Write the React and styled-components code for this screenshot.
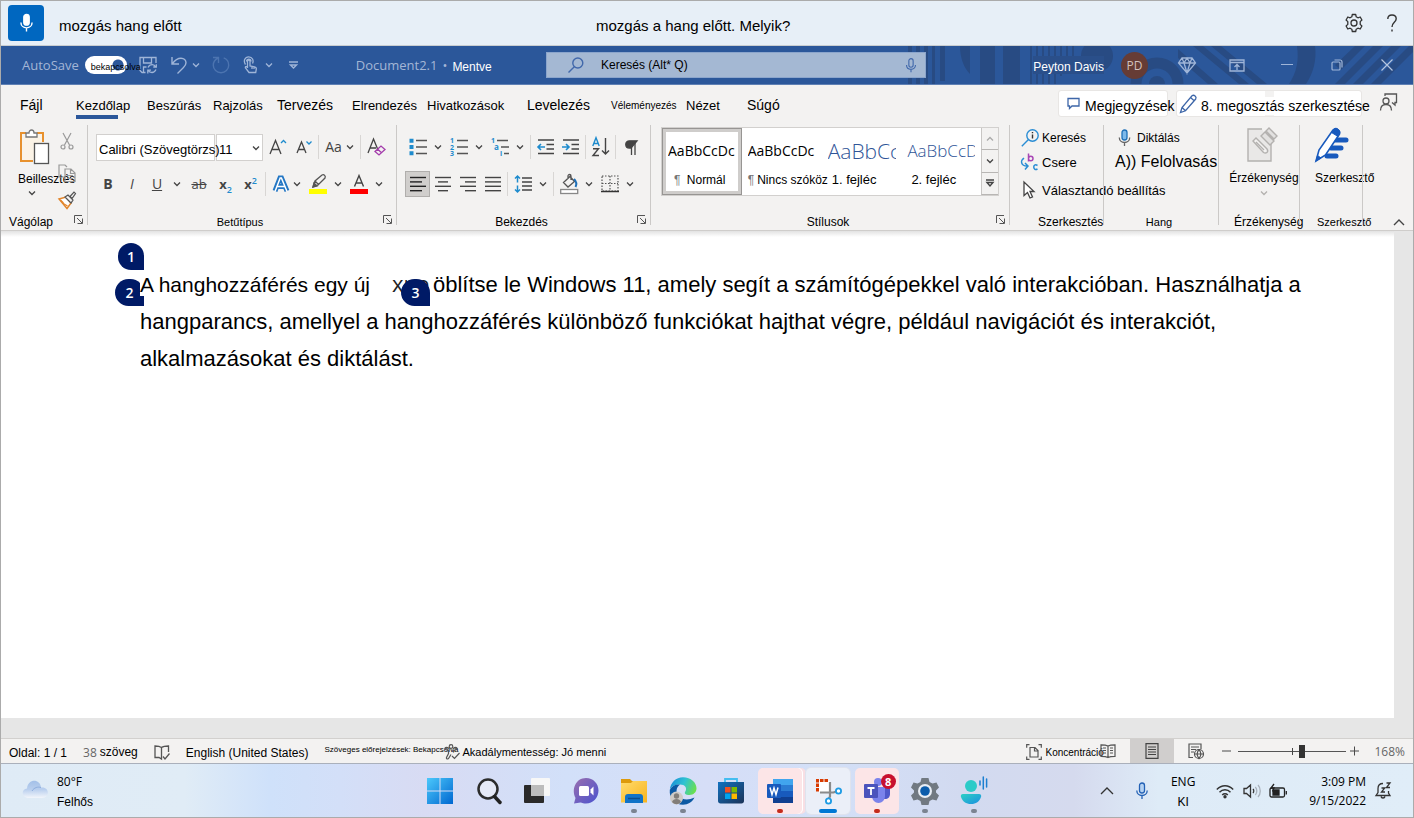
import React from "react";
import styled, { createGlobalStyle, css } from "styled-components";

const sans = '"Liberation Sans", Arial, sans-serif';
const ui = '"Open Sans", "Noto Sans", sans-serif';

const GlobalStyle = createGlobalStyle`
  * { box-sizing: border-box; }
  body { margin: 0; font-family: ${sans}; font-size: 12px; color: #000; background: #fff; }
  button, input, select { font: inherit; color: inherit; }
  button { border: 0; padding: 0; margin: 0; background: none; white-space: nowrap; }
  svg { display: block; flex: none; }
`;

const Desktop = styled.div`
  min-height: 100vh;
  display: flex;
  flex-direction: column;
  border: 1px solid #ababab;
`;

/* ---------- shared pieces ---------- */

const Drawing = styled.svg`
  overflow: visible;
`;

const Icon = ({ w = 18, h = w, box, color = "#4a4a4a", sw = 1, children }) => (
  <Drawing width={w} height={h} viewBox={box || `0 0 ${w} ${h}`} fill="none" stroke={color} strokeWidth={sw} aria-hidden="true">
    {children}
  </Drawing>
);

const Chevron = ({ color = "#444", up }) => (
  <Icon w={8} h={6} color={color} sw={1.3}>
    <path d={up ? "M1 4.5 4 1.5 7 4.5" : "M1 1.5 4 4.5 7 1.5"} />
  </Icon>
);

/* ---------- voice access bar ---------- */

const VoiceBar = styled.header`
  height: 45px;
  display: grid;
  grid-template-columns: 595fr 817fr;
  align-items: center;
  background: #e7eff7;
  border-bottom: 1px solid #c9cdd0;
  font-size: 15px;
`;
const VoicePart = styled.div`
  display: flex;
  align-items: center;
  justify-content: space-between;
  padding-right: 2px;
`;
const VoiceStatus = styled.div`
  display: flex;
  align-items: center;
  gap: 15px;
  padding-left: 7px;
`;
const VoiceText = styled.span`
  line-height: 20px;
  padding-top: 6px;
`;
const VoiceMic = styled.button`
  width: 36px;
  height: 36px;
  display: grid;
  place-items: center;
  border-radius: 4px;
  background: #0067c0;
`;
const VoiceTools = styled.div`
  display: flex;
`;
const VoiceTool = styled.button`
  width: 38px;
  height: 36px;
  display: grid;
  place-items: center;
`;

/* ---------- title bar ---------- */

const TitleBar = styled.div`
  position: relative;
  height: 39px;
  display: grid;
  grid-template-columns: 545fr 380fr 487fr;
  align-items: center;
  background: #2b579a;
  border-bottom: 1px solid #5f80b4;
  color: #fff;
`;
const Pattern = styled.svg`
  position: absolute;
  right: 0;
  top: 0;
  overflow: hidden;
`;
const QuickAccess = styled.div`
  display: flex;
  align-items: center;
  gap: 12px;
  padding-left: 21px;
`;
const AutoSave = styled.label`
  display: flex;
  align-items: center;
  gap: 6px;
  color: #a3b6d6;
  font-family: ${ui};
  font-size: 13px;
`;
const SwitchBox = styled.span`
  position: relative;
  display: flex;
`;
const Switch = styled.input`
  appearance: none;
  width: 42px;
  height: 18px;
  margin: 0;
  border-radius: 9px;
  background: radial-gradient(circle at 33px 9px, #2b579a 5px, #fff 6px);
`;
const SwitchText = styled.span`
  position: absolute;
  left: 6px;
  top: 5px;
  font: 9px/12px ${sans};
  color: #000;
`;
const QuickButton = styled.button`
  display: flex;
  align-items: center;
  justify-content: center;
  gap: 5px;
  min-width: 18px;
  height: 30px;
`;
const DocTitle = styled.div`
  display: flex;
  align-items: center;
  gap: 5px;
  margin-left: 41px;
  font-family: ${ui};
  font-size: 13px;
  color: #a3b6d6;
`;
const Saved = styled.span`
  font: 12px/16px ${sans};
  color: #fff;
  padding-top: 4px;
`;
const SearchBox = styled.label`
  position: relative;
  display: flex;
  align-items: center;
  height: 26px;
  padding: 0 8px 0 21px;
  gap: 17px;
  background: #a4b8d3;
  border: 1px solid #8ba5cc;
`;
const SearchInput = styled.input`
  flex: 1;
  min-width: 0;
  height: 22px;
  padding: 0;
  border: 0;
  background: none;
  font-size: 12px;
  &::placeholder { color: #000; opacity: 1; }
`;
const WindowTools = styled.div`
  position: relative;
  display: flex;
  align-items: center;
  justify-content: flex-end;
  padding-right: 1px;
`;
const UserName = styled.span`
  padding: 4px 0 0;
  margin-right: 17px;
  background: #2a4f8a;
`;
const Avatar = styled.span`
  width: 27px;
  height: 27px;
  margin-right: 14px;
  border-radius: 50%;
  display: grid;
  place-items: center;
  background: #663c35;
  color: #d3c2bf;
  font-family: ${ui};
  font-size: 12px;
`;
const WindowButton = styled.button`
  width: 50px;
  height: 38px;
  display: grid;
  place-items: center;
`;

/* ---------- ribbon tabs ---------- */

const TabBar = styled.nav`
  height: 35px;
  display: flex;
  justify-content: space-between;
  background: #f3f2f1;
`;
const Tabs = styled.div`
  display: grid;
  grid-template-columns: 56px 71px 66px 64px 75px 75px 100px 84px 75px 61px 40px;
  padding-left: 19px;
`;
const Tab = styled.button`
  text-align: left;
  padding-top: 6px;
  height: 34px;
  font-size: ${(p) => p.$size || 13}px;
  ${(p) =>
    p.$active &&
    css`
      background: linear-gradient(#2b579a, #2b579a) 0 100% / 42px 4px no-repeat;
    `}
`;
const TabActions = styled.div`
  display: flex;
  align-items: flex-start;
  gap: 8px;
  padding: 5px 16px 0 0;
  font-size: 14px;
`;
const ActionButton = styled.button`
  width: ${(p) => p.$w}px;
  height: 27px;
  display: flex;
  align-items: center;
  gap: ${(p) => p.$gap || 4}px;
  padding-left: ${(p) => p.$pl || 8}px;
  background: ${(p) =>
    p.$parted
      ? "linear-gradient(90deg, #fff 88px, #f3f2f1 88px, #f3f2f1 97px, #fff 97px)"
      : "#fff"};
  border: 1px solid #e8e6e4;
  border-radius: 3px;
`;
const ActionLabel = styled.span`
  position: relative;
  width: ${(p) => p.$w || 82}px;
  line-height: 18px;
  margin-top: 4px;
  text-align: left;
  background: #fff;
`;
const FeedbackButton = styled.button`
  position: relative;
  padding: 3px 0 0 10px;
`;

/* ---------- ribbon ---------- */

const Ribbon = styled.div`
  height: 111px;
  display: flex;
  background: #f3f2f1;
  border-bottom: 1px solid #cfcdcb;
`;
const Group = styled.section`
  width: ${(p) => p.$w}px;
  flex: none;
  display: flex;
  flex-direction: column;
  justify-content: space-between;
`;
const Divider = styled.span`
  flex: none;
  width: 1px;
  height: 100px;
  margin-top: 5px;
  background: #cbc9c7;
`;
const GroupFooter = styled.div`
  display: grid;
  grid-template-columns: ${(p) => (p.$pl ? "auto 1fr" : "1fr auto 1fr")};
  align-items: center;
  padding-left: ${(p) => p.$pl || 0}px;
  padding-right: 4px;
  height: 15px;
  line-height: 15px;
  font-size: ${(p) => p.$size || 12}px;
  white-space: nowrap;
`;
const LaunchButton = styled.button`
  grid-column: -2;
  justify-self: end;
  align-self: start;
`;
const ToolRows = styled.div`
  display: flex;
  flex-direction: column;
  gap: 11px;
  padding: 14px 0 0 8px;
`;
const ToolRow = styled.div`
  display: flex;
  align-items: center;
  height: 26px;
`;
const Tool = styled.button`
  flex: none;
  width: ${(p) => (p.$split ? "auto" : `${p.$w || 25}px`)};
  height: 26px;
  display: flex;
  align-items: center;
  justify-content: center;
  gap: ${(p) => p.$gap || 7}px;
  padding: 0 ${(p) => (p.$split ? 4 : 0)}px;
  background: ${(p) => (p.$on ? "#d0cecc" : "none")};
  outline: ${(p) => (p.$on ? "1px solid #b0aeac" : "0")};
  outline-offset: -1px;
`;
const Sep = styled.span`
  width: 1px;
  height: 24px;
  margin: 0 2px;
  background: #d8d6d4;
`;
const Glyph = styled.span`
  font-family: ${ui};
  font-size: ${(p) => p.$size || 15}px;
  line-height: 18px;
  font-weight: ${(p) => (p.$bold ? 700 : 400)};
  font-style: ${(p) => (p.$italic ? "italic" : "normal")};
  text-decoration: ${(p) => p.$deco || "none"};
  color: #444;
  min-width: ${(p) => p.$min || 0}px;
  sub, sup { font-size: 9px; line-height: 0; color: #1e8bcd; font-weight: 600; }
`;
const Combo = styled.span`
  width: ${(p) => p.$w}px;
  height: 27px;
  margin-right: 1px;
  display: flex;
  align-items: center;
  background: #fff;
  border: 1px solid #d2d0ce;
`;
const ComboSelect = styled.select`
  flex: none;
  position: relative;
  appearance: none;
  width: ${(p) => p.$w}px;
  height: 25px;
  padding: 5px 0 0 2px;
  border: 0;
  background: transparent;
  font-size: 13px;
`;
const ComboArrow = styled.span`
  margin-left: -10px;
  padding-top: 2px;
`;

const Clipboard = styled.div`
  display: grid;
  grid-template-columns: 54px 24px;
  padding: 9px 0 0 3px;
`;
const PasteButton = styled.button`
  display: flex;
  flex-direction: column;
  align-items: flex-start;
  padding-left: 14px;
  span { line-height: 14px; margin: 7px 0 4px; }
`;
const PasteArrow = styled.i`
  padding-left: 10px;
`;
const SmallStack = styled.div`
  display: flex;
  flex-direction: column;
  gap: 9px;
`;

const Gallery = styled.div`
  display: flex;
  width: 338px;
  height: 69px;
  margin: 7px 0 0 10px;
  background: #fff;
  border: 1px solid #d2d0ce;
`;
const StyleTile = styled.button`
  width: 80px;
  height: 67px;
  display: grid;
  grid-template-rows: 35px 22px;
  align-content: center;
  padding: 0 0 0 6px;
  text-align: left;
  ${(p) =>
    p.$on &&
    css`
      box-shadow: inset 0 0 0 1px #979593, inset 0 0 0 4px #cfcdcb;
    `}
`;
const StyleSample = styled.span`
  width: 68px;
  overflow: hidden;
  align-self: center;
  font-family: ${ui};
  font-weight: ${(p) => (p.$head ? 300 : 400)};
  font-size: ${(p) => p.$size}px;
  line-height: 28px;
  color: ${(p) => (p.$head ? "#2f5597" : "#000")};
`;
const StyleName = styled.span`
  padding-left: ${(p) => p.$pl || 0}px;
  font-size: ${(p) => p.$size || 12}px;
  line-height: 24px;
  i { font-style: normal; color: #777; font-size: 12px; margin-right: 3px; }
`;
const GalleryNav = styled.div`
  display: grid;
  grid-template-rows: 1fr 1fr 1fr;
  width: 17px;
`;
const GalleryButton = styled.button`
  display: grid;
  place-items: center;
  background: #f3f2f1;
  border-left: 1px solid #c8c6c4;
  border-bottom: 1px solid #b8b6b4;
`;

const CommandList = styled.div`
  display: grid;
  grid-template-rows: 24px 24px 32px;
  padding: 6px 0 0 11px;
`;
const Command = styled.button`
  display: flex;
  align-items: center;
  gap: 3px;
  font-size: ${(p) => p.$size || 12}px;
`;
const BigButton = styled.button`
  display: flex;
  flex-direction: column;
  align-items: ${(p) => (p.$start ? "flex-start" : "center")};
  width: 90px;
  padding: 7px 0 0 ${(p) => (p.$start ? 15 : 0)}px;
  span { line-height: 16px; margin: 7px 0 4px; }
`;
const CollapseCell = styled.div`
  flex: 1;
  display: flex;
  justify-content: flex-end;
  align-items: flex-end;
  padding: 0 8px 4px 0;
`;

/* ---------- document ---------- */

const Canvas = styled.main`
  flex: 1;
  display: flex;
  padding: 0 19px 20px 0;
  background: #e6e6e6;
`;
const Page = styled.article`
  flex: 1;
  padding: 35px 80px 0 139px;
  background: linear-gradient(#e2e2e2, #fff 6px);
`;
const Paragraph = styled.p`
  position: relative;
  z-index: 0;
  margin: 0;
  font-size: 22px;
  line-height: 37px;
`;
const Lead = styled.span`
  position: relative;
  font-size: 21px;
  background: #fff;
`;
const Covered = styled.span`
  display: inline-block;
  width: 41px;
  margin-left: 22px;
  line-height: 24px;
  font-family: ${ui};
  color: #222;
`;
const Badge = styled.span`
  position: absolute;
  left: ${(p) => p.$x}px;
  top: ${(p) => p.$y}px;
  width: ${(p) => p.$w || 29}px;
  height: 27px;
  border-radius: 14px 14px 0 14px;
  background: #001a66;
  color: #fff;
  font: 600 14px/27px ${ui};
  text-align: center;
`;

/* ---------- status bar ---------- */

const StatusBar = styled.footer`
  height: 26px;
  display: flex;
  justify-content: space-between;
  align-items: center;
  background: #f3f2f1;
  border-top: 1px solid #d2d0ce;
  border-bottom: 1px solid #aab0bb;
`;
const StatusPart = styled.div`
  display: flex;
  align-items: center;
  gap: ${(p) => p.$gap || 0}px;
  padding: 0 8px;
  height: 24px;
`;
const StatusItem = styled.button`
  display: flex;
  align-items: center;
  gap: 3px;
  height: 24px;
  padding-top: ${(p) => (p.$low ? 4 : 2)}px;
  width: ${(p) => (p.$w ? `${p.$w}px` : "auto")};
  font-size: ${(p) => p.$size || 12}px;
`;
const Count = styled.span`
  font-family: ${ui};
  font-size: 12px;
  color: #666;
`;
const Prediction = styled.div`
  display: flex;
  align-items: center;
  > :first-child { align-items: flex-start; padding-top: 6px; }
`;
const ViewButton = styled.button`
  width: 44px;
  height: 24px;
  display: grid;
  place-items: center;
  background: ${(p) => (p.$on ? "#d0cecd" : "none")};
`;
const ZoomStep = styled.button`
  width: 12px;
  margin: 0 4px;
`;
const ZoomRange = styled.input`
  appearance: none;
  width: 108px;
  height: 14px;
  margin: 0;
  background: linear-gradient(#444, #444) 54px 50% / 1px 7px no-repeat,
    linear-gradient(#555, #555) 0 50% / 100% 1px no-repeat;
  &::-webkit-slider-thumb { appearance: none; width: 6px; height: 13px; background: #333; }
`;
const ZoomValue = styled.span`
  margin-left: 8px;
  font-family: ${ui};
  color: #666;
`;

/* ---------- taskbar ---------- */

const Taskbar = styled.div`
  height: 53px;
  display: grid;
  grid-template-columns: 1fr 582px 1fr;
  align-items: center;
  font-family: ${ui};
  background: linear-gradient(90deg, #dfebf6 0%, #e0ecf6 13%, #cfe1fa 19%, #d3dff8 24%, #d8dbf3 30%, #d2e0f9 40%, #d6def7 50%, #d3e0f8 58%, #d2daf0 68%, #d5daee 76%, #deebf7 82%, #e0edf8 100%);
`;
const Weather = styled.button`
  display: flex;
  align-items: center;
  gap: 8px;
  padding-left: 21px;
  text-align: left;
`;
const TwoLines = styled.span`
  display: grid;
  grid-template-rows: 19px 19px;
  align-items: center;
  text-align: ${(p) => p.$align || "left"};
  b { font-weight: 400; font-family: ${sans}; padding-top: 3px; }
`;
const AppList = styled.div`
  display: grid;
  grid-template-columns: repeat(12, 1fr);
  justify-items: center;
`;
const TaskButton = styled.button`
  position: relative;
  width: 44px;
  height: 46px;
  display: grid;
  place-items: center;
  border-radius: 5px;
  background: ${(p) => p.$bg || "none"};
  box-shadow: ${(p) => p.$edge || "none"};
  &::after {
    content: "";
    position: absolute;
    bottom: 1px;
    left: 50%;
    width: ${(p) => p.$mw || 6}px;
    height: 4px;
    margin-left: -${(p) => (p.$mw || 6) / 2}px;
    border-radius: 2px;
    background: ${(p) => p.$mark || "transparent"};
  }
`;
const AlertCount = styled.span`
  position: absolute;
  top: 6px;
  right: 3px;
  width: 15px;
  height: 15px;
  border-radius: 50%;
  background: #c8102e;
  color: #fff;
  font: 700 11px/15px ${ui};
`;
const Tray = styled.div`
  display: flex;
  align-items: center;
  justify-content: flex-end;
  padding-right: 20px;
`;
const TrayButton = styled.button`
  width: ${(p) => p.$w}px;
  height: 40px;
  display: grid;
  place-items: center;
`;
const Clock = styled.button`
  margin: 0 9px 0 12px;
`;

/* ---------- drawings ---------- */

const Mic = ({ color = "#fff", fill = "none", h = 18, w = 14, sw = 1.3, capsule }) => (
  <Icon w={w} h={h} box="0 0 14 18" color={color} sw={sw}>
    <rect x="4.5" y="1" width="5" height="10" rx="2.5" fill={fill} stroke={capsule || color} />
    <path d="M1.8 8.5c0 3 2.2 5 5.2 5s5.200-2 5.200-5M7 13.500V17" />
  </Icon>
);

const Lines = ({ rows, color = "#444" }) => (
  <Icon w={18} h={16} color={color} sw={1.4}>
    {rows.map(([a, b], i) => (
      <path key={i} d={`M${a} ${1.5 + i * 4.4}H${b}`} />
    ))}
  </Icon>
);

const TinyText = ({ x, y, children, size = 7 }) => (
  <text x={x} y={y} fontSize={size} fontWeight="700" fill="#1e8bcd" stroke="none" fontFamily="Open Sans, sans-serif">
    {children}
  </text>
);

const Launcher = ({ name }) => (
  <LaunchButton aria-label={name}>
    <Icon w={9} h={9} color="#555">
      <path d="M8 .5H.5V8M3 3l5 5M8.5 3.5v5h-5" />
    </Icon>
  </LaunchButton>
);

const Footer = ({ label, launcher, pl, size }) => (
  <GroupFooter $pl={pl} $size={size}>
    {!pl && <span />}
    <span>{label}</span>
    {launcher ? <Launcher name={label} /> : !pl && <span />}
  </GroupFooter>
);

const TitlePattern = () => (
  <Pattern width="510" height="38" viewBox="0 0 510 38" aria-hidden="true">
    <g fill="#284b83">
      <path d="M5 0h4v38H5zM13 0h4v38h-4zM21 0h4v38h-4zM29 0h3v38h-3zM37 0h5v35h-5zM57 0h10v28c-6-6-10-16-10-28zM77 0h15v38H77zM100 0h17v38h-17z" />
      <path d="M127 0h2v38h-2zM133 0h2v38h-2zM139 0h2v38h-2zM145 0h2v38h-2zM151 0h2v38h-2zM157 0h2v30h-2zM163 0h2v24h-2zM169 0h2v18h-2z" />
      <circle cx="194" cy="10" r="16" />
      <path d="M290 0h10l46 38h-10zM308 0h10l46 38h-10zM275 3l40 35h-10l-30-26z" />
      <path d="M396 0h18c2 14-2 28-9 38h-17c8-12 10-24 8-38z" transform="translate(-2 0)" />
      <path d="M470 0h10l-38 38h-10zM452 0h10l-24 24-6-5zM488 0h10l-38 38h-10zM506 0h10l-38 38h-10z" />
    </g>
    <circle cx="254" cy="38" r="21" fill="none" stroke="#284b83" strokeWidth="11" />
    <circle cx="254" cy="38" r="8" fill="#284b83" />
  </Pattern>
);

const tint = "#9fb5d8";

const tabs = [
  ["Fájl", 14],
  ["Kezdőlap", 13, true],
  ["Beszúrás", 13],
  ["Rajzolás", 13],
  ["Tervezés", 14],
  ["Elrendezés", 13],
  ["Hivatkozások", 13],
  ["Levelezés", 14],
  ["Véleményezés", 10],
  ["Nézet", 13],
  ["Súgó", 14],
];

function TopBars() {
  return (
    <>
      <VoiceBar>
        <VoiceStatus>
          <VoiceMic aria-label="Mikrofon">
            <Mic fill="#fff" w={15} h={20} />
          </VoiceMic>
          <VoiceText>mozgás hang előtt</VoiceText>
        </VoiceStatus>
        <VoicePart>
          <VoiceText>mozgás a hang előtt. Melyik?</VoiceText>
          <VoiceTools>
            <VoiceTool aria-label="Beállítások">
              <Icon w={20} color="#333" sw={1.3}>
                <path d="M8.3 1.500h3.400l.5 2.300 1.700 1 2.300-.8 1.700 3-1.700 1.600v2.800l1.700 1.600-1.700 3-2.300-.8-1.700 1-.5 2.300H8.300l-.5-2.300-1.700-1-2.300.8-1.700-3 1.700-1.600V8.600L2.100 7l1.700-3 2.300.8 1.700-1z" strokeLinejoin="round" />
                <circle cx="10" cy="10" r="3" />
              </Icon>
            </VoiceTool>
            <VoiceTool aria-label="Súgó">
              <Icon w={12} h={18} color="#333" sw={1.4}>
                <path d="M1.800 5c0-2.400 1.700-4 4.200-4s4.200 1.600 4.200 3.800C10.200 8.300 6 8.500 6 13M6 15.500v2" />
              </Icon>
            </VoiceTool>
          </VoiceTools>
        </VoicePart>
      </VoiceBar>

      <TitleBar>
        <TitlePattern />
        <QuickAccess>
          <AutoSave>
            AutoSave
            <SwitchBox>
              <Switch type="checkbox" role="switch" defaultChecked />
              <SwitchText>bekapcsolva</SwitchText>
            </SwitchBox>
          </AutoSave>
          <QuickButton aria-label="Mentés">
            <Icon w={18} color={tint} sw={1.3}>
              <path d="M6.500 16.500H3L1 14.500V1.500h16V7M4.500 1.500V7h8V1.500M4.500 16v-5h3" />
              <path d="M9 11.500c1-2 2.500-2.800 4.200-2.800 1.600 0 2.800.8 3.600 2.300M17.300 8.200V11h-3M17 13.500c-1 2-2.200 3-4 3-1.600 0-3-.8-3.800-2.300M8.800 17.500v-3.300H12" />
            </Icon>
          </QuickButton>
          <QuickButton aria-label="Visszavonás">
            <Icon w={18} color={tint} sw={1.4}>
              <path d="M3 1v7h7M3.200 7.800C6 4 9 2.200 12 2.200c3 0 5 2 5 4.600 0 2-1 3.200-2.500 4.700L8.500 17.500" />
            </Icon>
            <Chevron color={tint} />
          </QuickButton>
          <QuickButton aria-label="Ismétlés">
            <Icon w={18} color="#4c74b0" sw={1.4}>
              <path d="M1 1.500h5.500V7M6 2C3 3.500 1.300 6.200 1.300 9.200c0 4.200 3.400 7.600 7.700 7.600s7.700-3.400 7.700-7.600c0-3.300-2-6.200-5-7.300" />
            </Icon>
          </QuickButton>
          <QuickButton aria-label="Érintés">
            <Icon w={18} color={tint} sw={1.3}>
              <path d="M5.500 12V5.500c0-2 2.500-2 2.500 0V10l4.500.8c1.500.3 2 1 1.800 2.300l-.6 3.400H7L3.500 12c-.6-1.200.8-2 2-.8zM3.500 8.500C1 5 3 .8 6.700.8S12 4.500 10.500 7.500M4.500 5.500c0-3.200 4.500-3.200 4.500 0M10 10.500V13M12 11v2" />
            </Icon>
            <Chevron color={tint} />
          </QuickButton>
          <QuickButton aria-label="Testreszabás">
            <Icon w={9} h={8} color={tint} sw={1.4}>
              <path d="M0 1h9M1.500 4l3 3 3-3z" />
            </Icon>
          </QuickButton>
          <DocTitle>
            Document2.1 <span>•</span> <Saved>Mentve</Saved>
          </DocTitle>
        </QuickAccess>
        <SearchBox>
          <Icon w={16} color="#4168ab" sw={1.4}>
            <circle cx="9.800" cy="6" r="5" />
            <path d="M6.300 9.700.5 15.500" />
          </Icon>
          <SearchInput type="search" placeholder="Keresés (Alt* Q)" aria-label="Keresés" />
          <Mic color="#4168ab" w={12} h={17} />
        </SearchBox>
        <WindowTools>
          <UserName>Peyton Davis</UserName>
          <Avatar>PD</Avatar>
          <WindowButton aria-label="Premium">
            <Icon w={18} h={17} color={tint} sw={1.3}>
              <path d="M4 1h10l3.500 5L9 16 .5 6zM.5 6h17M4 1l2 5 3 10 3-10 2-5M6 6l3-5 3 5" />
            </Icon>
          </WindowButton>
          <WindowButton aria-label="Menüszalag megjelenítése">
            <Icon w={16} h={13} color={tint} sw={1.3}>
              <path d="M1 1h14v11H1zM1 3.500h14M8 11V5.500M5.500 8 8 5.500 10.500 8" />
            </Icon>
          </WindowButton>
          <WindowButton aria-label="Kis méret">
            <Icon w={12} h={2} color={tint}>
              <path d="M0 .5h12" />
            </Icon>
          </WindowButton>
          <WindowButton aria-label="Előző méret">
            <Icon w={12} color={tint} sw={1.2}>
              <rect x="1" y="3" width="8" height="8" rx="1" />
              <path d="M3.500 1H9c1.300 0 2 .7 2 2v5.500" />
            </Icon>
          </WindowButton>
          <WindowButton aria-label="Bezárás">
            <Icon w={12} color="#b5c6e0" sw={1.2}>
              <path d="m.5.5 11 11M11.500.5l-11 11" />
            </Icon>
          </WindowButton>
        </WindowTools>
      </TitleBar>

      <TabBar>
        <Tabs>
          {tabs.map(([name, size, active]) => (
            <Tab key={name} $size={size} $active={active}>
              {name}
            </Tab>
          ))}
        </Tabs>
        <TabActions>
          <ActionButton $w={110} $gap={5}>
            <Icon w={13} h={13} color="#3d66a8" sw={1.3}>
              <path d="M1 1.500h11v7.500H5L2.500 11.500V9H1z" />
            </Icon>
            <ActionLabel>Megjegyzések</ActionLabel>
          </ActionButton>
          <ActionButton $w={186} $pl={2} $gap={4} $parted>
            <Icon w={18} h={20} color="#3d66a8" sw={1.3}>
              <path d="M1.500 18.500l1.500-5L13 1.800c2-1.500 5 1 3.700 3.200L6.500 16.800zM11.500 3.500l3.700 3.200M3 13.500l3.500 3.300" />
            </Icon>
            <ActionLabel $w={159}>8. megosztás szerkesztése</ActionLabel>
          </ActionButton>
          <FeedbackButton aria-label="Visszajelzés">
            <Icon w={17} h={18} color="#555" sw={1.3}>
              <circle cx="6" cy="8" r="3" />
              <path d="M.5 17.500c0-4 2.500-6 5.500-6s5.500 2 5.500 6M5 3V1h11.500v8.500H15V12l-3-2.500" />
            </Icon>
          </FeedbackButton>
        </TabActions>
      </TabBar>
    </>
  );
}

function ClipboardGroup() {
  return (
    <Group $w={86}>
      <Clipboard>
        <PasteButton>
          <Icon w={32} h={36} color="#e8912d" sw={2}>
            <path d="M8 4H3v28h12M19 4h6v9" fill="none" />
            <path d="M4.500 6H24v8h-8v17H4.500z" fill="#fbf3e6" stroke="none" />
            <path d="M8 8V4h3c0-4 5-4 5 0h3v4z" fill="#fff" stroke="#777" strokeWidth="1.300" />
            <rect x="16.500" y="14.500" width="14" height="20" fill="#fff" stroke="#555" strokeWidth="1.300" />
          </Icon>
          <span>Beillesztés</span>
          <PasteArrow>
            <Chevron />
          </PasteArrow>
        </PasteButton>
        <SmallStack>
          <Tool $w={18} aria-label="Kivágás">
            <Icon w={14} h={18} color="#999" sw={1.2}>
              <path d="M3 0l6.500 12M11 0 4.500 12" />
              <circle cx="3" cy="14" r="2" />
              <circle cx="11" cy="14" r="2" />
            </Icon>
          </Tool>
          <Icon w={18} h={18} color="#999" sw={1.2}>
            <path d="M6 13H1V1h6l2 2M7 5h6l4 4v8.500H7zM12.500 5v4.500H17M9 11.500h6M9 14.500h6" />
          </Icon>
          <Icon w={18} h={18} color="#555" sw={1.2}>
            <path d="M1 8l7-2 5 6-4 5.500z" fill="#fff" stroke="#e2852b" strokeWidth="1.500" />
            <path d="M4.500 12l5 3M2.500 9l3 3" stroke="#e2852b" />
            <path d="M7 6l3-2 5 5-2 3zM12 5.500 16 1l1.500 1.500L14 7.500z" fill="#f3f2f1" />
          </Icon>
        </SmallStack>
      </Clipboard>
      <Footer label="Vágólap" launcher pl={8} />
    </Group>
  );
}

function FontGroup() {
  return (
    <Group $w={308}>
      <ToolRows>
        <ToolRow>
          <Combo $w={119}>
            <ComboSelect $w={126} aria-label="Betűtípus">
              <option>Calibri (Szövegtörzs)</option>
            </ComboSelect>
          </Combo>
          <Combo $w={47}>
            <ComboSelect $w={45} aria-label="Betűméret">
              <option>11</option>
            </ComboSelect>
            <ComboArrow>
              <Chevron />
            </ComboArrow>
          </Combo>
          <Tool $w={28} aria-label="Betűméret növelése">
            <Icon w={18} h={16} color="#444" sw={1.3}>
              <path d="M1 15 6.500 1.500 12 15M3 10.500h7" />
              <path d="M12 4l2.500-2.500L17 4" stroke="#1e8bcd" />
            </Icon>
          </Tool>
          <Tool $w={24} aria-label="Betűméret csökkentése">
            <Icon w={16} h={14} color="#444" sw={1.3}>
              <path d="M1 13 5.500 2 10 13M2.800 9.500h5.500" />
              <path d="M10.500 1.500 13 4l2.500-2.500" stroke="#1e8bcd" />
            </Icon>
          </Tool>
          <Sep />
          <Tool $w={37} $gap={4} aria-label="Kis- és nagybetű">
            <Glyph $size={14}>Aa</Glyph>
            <Chevron />
          </Tool>
          <Sep />
          <Tool $w={26} aria-label="Formázás törlése">
            <Icon w={19} h={18} color="#444" sw={1.3}>
              <path d="M1 15 6.500 1 11 12M3 10h6" />
              <path d="M8 13.500 14 8l4 3.500-6 5.500zM10.500 11l4 3.800" stroke="#a33cab" fill="#f3f2f1" />
            </Icon>
          </Tool>
        </ToolRow>
        <ToolRow>
          <Tool $w={24}><Glyph $bold $size={14}>B</Glyph></Tool>
          <Tool $w={24}><Glyph $italic $size={14}>I</Glyph></Tool>
          <Tool $split $gap={7}>
            <Glyph $deco="underline" $size={14} $min={18}>U</Glyph>
            <Chevron />
          </Tool>
          <Tool $w={28}><Glyph $deco="line-through" $size={13}>ab</Glyph></Tool>
          <Tool><Glyph $bold $size={13}>x<sub>2</sub></Glyph></Tool>
          <Tool><Glyph $bold $size={13}>x<sup>2</sup></Glyph></Tool>
          <Sep />
          <Tool $split $gap={3} aria-label="Szöveghatások">
            <Icon w={18} h={18} color="#2477c4" sw={5}>
              <path d="M3 16 8 3h1.500L15 16M5 11.500h8" />
              <path d="M3 16.500 8.200 3h1.200L15 16.500M5 11.500h8" stroke="#fff" strokeWidth="1.500" />
            </Icon>
            <Chevron />
          </Tool>
          <Tool $split aria-label="Kiemelés">
            <Icon w={18} h={20} color="#555" sw={1.3}>
              <path d="M4 13l2-6 7-6c2-1 4 1 3 3l-7 7zM6 7l4 4" />
              <path d="M4 13l1-4 3 3z" fill="#555" />
              <path d="M0 17.500h18" stroke="#ff0" strokeWidth="5" />
            </Icon>
            <Chevron />
          </Tool>
          <Tool $split aria-label="Betűszín">
            <Icon w={18} h={20} color="#444" sw={1.4}>
              <path d="M4.500 12.500 9 1.500l4.500 11M6 9h6" />
              <path d="M0 17.500h18" stroke="#f00" strokeWidth="5" />
            </Icon>
            <Chevron />
          </Tool>
        </ToolRow>
      </ToolRows>
      <Footer label="Betűtípus" launcher size={11} />
    </Group>
  );
}

const ParagraphGroup = () => (
  <Group $w={253}>
    <ToolRows>
      <ToolRow>
        <Tool $split aria-label="Felsorolás">
          <Icon w={18} h={18} color="#555" sw={1.3}>
            <path d="M7 2.500h11M7 9h11M7 15.500h11" />
            <path d="M.5.8h4v4h-4zM.5 7h4v4h-4zM.5 13.300h4v4h-4z" fill="#1e8bcd" stroke="none" />
          </Icon>
          <Chevron />
        </Tool>
        <Tool $split aria-label="Számozás">
          <Icon w={18} h={18} color="#555" sw={1.3}>
            <path d="M7 2.500h11M7 9h11M7 15.500h11" />
            <TinyText x="0" y="5">1</TinyText>
            <TinyText x="0" y="11.500">2</TinyText>
            <TinyText x="0" y="18">3</TinyText>
          </Icon>
          <Chevron />
        </Tool>
        <Tool $split aria-label="Többszintű lista">
          <Icon w={18} h={18} color="#555" sw={1.3}>
            <path d="M6 2.500h11M10 9h8M13 15.500h5" />
            <TinyText x="0" y="5">1</TinyText>
            <TinyText x="3" y="11.500" size={8}>a</TinyText>
            <TinyText x="9" y="18">i</TinyText>
          </Icon>
          <Chevron />
        </Tool>
        <Sep />
        {["M8 8H1M4 5 1 8l3 3", "M0 8h7M4 5l3 3-3 3"].map((d, i) => (
          <Tool key={d} aria-label={i ? "Behúzás növelése" : "Behúzás csökkentése"}>
            <Icon w={17} h={16} color="#444" sw={1.4}>
              <path d="M1 1h16M9.500 5.500H17M9.500 10H17M1 14.500h16" />
              <path d={d} stroke="#1e8bcd" strokeWidth="1.600" />
            </Icon>
          </Tool>
        ))}
        <Sep />
        <Tool aria-label="Rendezés">
          <Icon w={18} h={20} color="#444" sw={1.4}>
            <path d="M.8 9 4 .8 7.200 9M2 6.500h4" stroke="#1e8bcd" />
            <path d="M1 11.800h5.500L1 18.500h6M13.500 1v16M10 13.500l3.500 3.500 3.500-3.500" />
          </Icon>
        </Tool>
        <Sep />
        <Tool aria-label="Szerkesztési jelek">
          <Icon w={12} h={15} color="#444" sw={1.3}>
            <path d="M12 .8H4.500C-.5.8-.5 8 4.500 8H6z" fill="#444" />
            <path d="M6.500 1v14M10 1v14" />
          </Icon>
        </Tool>
      </ToolRow>
      <ToolRow>
        <Tool $on aria-label="Balra zárt">
          <Lines rows={[[1, 17], [1, 13], [1, 17], [1, 13]]} color="#222" />
        </Tool>
        <Tool aria-label="Középre zárt">
          <Lines rows={[[1, 17], [4, 14], [1, 17], [4, 14]]} />
        </Tool>
        <Tool aria-label="Jobbra zárt">
          <Lines rows={[[1, 17], [6, 17], [1, 17], [6, 17]]} />
        </Tool>
        <Tool aria-label="Sorkizárt">
          <Lines rows={[[1, 17], [1, 17], [1, 17], [1, 17]]} />
        </Tool>
        <Sep />
        <Tool $split aria-label="Sorköz">
          <Icon w={18} h={18} color="#444" sw={1.4}>
            <path d="M8 3h10M8 7h10M8 11h10M8 15h10" />
            <path d="M3.500 1v6.500M1 3.500 3.500 1 6 3.500M3.500 17v-6.500M1 14.500 3.500 17 6 14.500" stroke="#1e8bcd" strokeWidth="1.500" />
          </Icon>
          <Chevron />
        </Tool>
        <Sep />
        <Tool $split aria-label="Árnyékolás">
          <Icon w={18} h={20} color="#555" sw={1.3}>
            <path d="M3.500 8.500 10 2.500l4.500 5L8 13zM8 4.500V2c0-2 3-2 3 0v4" />
            <path d="M14 5c2 2 3 5 1.500 8" stroke="#1e70b8" strokeWidth="2" />
            <rect x=".7" y="15.500" width="17" height="4" fill="#fff" stroke="#888" />
          </Icon>
          <Chevron />
        </Tool>
        <Tool $split aria-label="Szegélyek">
          <Icon w={18} h={18} color="#555" sw={1.2}>
            <path d="M1 1h16v15H1zM9 1v15M1 8.500h16" strokeDasharray="1.500 1.500" />
            <path d="M0 16.500h18" stroke="#333" strokeWidth="1.500" />
          </Icon>
          <Chevron />
        </Tool>
      </ToolRow>
    </ToolRows>
    <Footer label="Bekezdés" launcher />
  </Group>
);

const StylesGroup = () => (
  <Group $w={358}>
    <Gallery>
      <StyleTile $on>
        <StyleSample $size={14}>AaBbCcDc</StyleSample>
        <StyleName $pl={6}><i>¶</i> Normál</StyleName>
      </StyleTile>
      <StyleTile>
        <StyleSample $size={14}>AaBbCcDc</StyleSample>
        <StyleName><i>¶</i>Nincs szóköz</StyleName>
      </StyleTile>
      <StyleTile>
        <StyleSample $size={21} $head>AaBbCc</StyleSample>
        <StyleName $size={13} $pl={4}>1. fejléc</StyleName>
      </StyleTile>
      <StyleTile>
        <StyleSample $size={17} $head>AaBbCcD</StyleSample>
        <StyleName $size={13} $pl={4}>2. fejléc</StyleName>
      </StyleTile>
      <GalleryNav>
        <GalleryButton aria-label="Előző"><Chevron up color="#aaa" /></GalleryButton>
        <GalleryButton aria-label="Következő"><Chevron /></GalleryButton>
        <GalleryButton aria-label="Továbbiak">
          <Icon w={8} h={8} color="#444" sw={1.4}>
            <path d="M0 1h8M1 3.500 4 7l3-3.500z" />
          </Icon>
        </GalleryButton>
      </GalleryNav>
    </Gallery>
    <Footer label="Stílusok" launcher />
  </Group>
);

const CommandGroups = () => (
  <>
    <Group $w={93}>
      <CommandList>
        <Command>
          <Icon w={18} color="#2a8dd4" sw={1.4}>
            <circle cx="11.500" cy="6.500" r="5.700" />
            <path d="M7.500 10.500.8 17.200" />
            <path d="M11.500 5.500v4M11.500 3v1.300" stroke="#333" />
          </Icon>
          Keresés
        </Command>
        <Command $size={13}>
          <Icon w={18} color="#2a8dd4" sw={1.5}>
            <path d="M7.500.5v8M7.500 5.500c0-3 4.500-3 4.500 0s-4.500 3-4.500 0" stroke="#a846b5" />
            <path d="M16.500 12.500c-5-3-5 6 0 3.500M3 5c-4 3-3 8 3 8M4 10l3 3-3 3.500" />
          </Icon>
          Csere
        </Command>
        <Command $size={13}>
          <Icon w={18} color="#444" sw={1.3}>
            <path d="M3 1v13.500l3.500-3L9 17l2.500-1L9 10.500h4z" fill="#fff" />
          </Icon>
          Választandó beállítás
        </Command>
      </CommandList>
      <Footer label="Szerkesztés" pl={28} />
    </Group>
    <Divider />
    <Group $w={114}>
      <CommandList>
        <Command>
          <Mic color="#666" fill="#7db9ea" capsule="#1e70b8" w={19} h={18} />
          Diktálás
        </Command>
        <Command $size={16}>A)) Felolvasás</Command>
      </CommandList>
      <Footer label="Hang" size={11} />
    </Group>
    <Divider />
    <Group $w={80}>
      <BigButton>
        <Icon w={34} h={36} color="#b3b1af" sw={1.4}>
          <path d="M15 2H1v32h23V17" fill="#e9e8e7" />
          <path d="M6 14l3-3 11 11c2 3-1 5-3.500 3.500zM9 15l8 8" fill="#f3f2f1" />
          <path d="M14 9l4-4 9 9-4 4zM19 4l3-3 8 8-3 3z" fill="#e2e1e0" />
        </Icon>
        <span>Érzékenység</span>
        <Chevron color="#b3b1af" />
      </BigButton>
      <Footer label="Érzékenység" pl={15} />
    </Group>
    <Divider />
    <Group $w={62}>
      <BigButton $start>
        <Icon w={34} h={36} color="#185abd" sw={5}>
          <path d="M20 13h11M16 21h10M12 29h9" strokeLinecap="round" />
          <path d="M1 34l3-11L18 3c2.500-3 8 .5 6.500 4L10.500 28z" fill="#fff" strokeWidth="1.600" />
          <path d="M1 34l1.500-5.500L6 31zM16.500 5.500 19 2c2-2 6 .5 5.500 3.500l-1.500 4z" fill="#185abd" strokeWidth="1" />
        </Icon>
        <span>Szerkesztő</span>
      </BigButton>
      <Footer label="Szerkesztő" pl={17} size={11} />
    </Group>
    <Divider />
    <CollapseCell>
      <button aria-label="Menüszalag összecsukása">
        <Icon w={12} h={7} color="#444" sw={1.4}>
          <path d="m1 6 5-5 5 5" />
        </Icon>
      </button>
    </CollapseCell>
  </>
);

const Status = () => (
  <StatusBar>
    <StatusPart $gap={16}>
      <StatusItem $low>Oldal: 1 / 1</StatusItem>
      <StatusItem><Count>38</Count>szöveg</StatusItem>
      <StatusItem aria-label="Nyelvi ellenőrzés">
        <Icon w={16} h={15} color="#555" sw={1.3}>
          <path d="M7.500 2.500C5.500 1 3 1 1 1v11.500h4l2.500 1.500V2.500C9.500 1 12 1 14.500 1v6M9 11.500l2 2.500 4.500-5.500" />
        </Icon>
      </StatusItem>
      <StatusItem $low>English (United States)</StatusItem>
      <Prediction>
        <StatusItem $size={8} $w={119}>Szöveges előrejelzések: Bekapcsolva</StatusItem>
        <StatusItem $size={11}>
          <Icon w={16} h={16} color="#555" sw={1.2}>
            <circle cx="7" cy="2.500" r="1.800" />
            <path d="M5 4.500C3 3 1 3 1 4.500c0 1 1.500 1.500 3.500 2v3l-2 4c-.5 1.500 1.500 2 2.200.8L7 10.500M9 4.500c2-1.500 4-1.500 4 0 0 1-1.500 1.500-3.500 2v2M8 12l2.500 2.500L15.500 9" />
          </Icon>
          Akadálymentesség: Jó menni
        </StatusItem>
      </Prediction>
    </StatusPart>
    <StatusPart>
      <StatusItem $size={10} $w={60}>
        <Icon w={16} h={16} color="#555" sw={1.2}>
          <path d="M3.500.7H.7v3M12.500.7h2.800v3M.7 12.500v2.800h2.800M15.300 12.500v2.800h-2.800M4 3.500h5l3 3v6.500H4zM8.500 3.500V7H12" />
        </Icon>
        Koncentráció
      </StatusItem>
      <ViewButton aria-label="Olvasási mód">
        <Icon w={16} h={14} color="#555" sw={1.2}>
          <path d="M8 2C6 .8 3.500.8 1 .8v11.500c3 0 5 0 7 1.200 2-1.200 4-1.200 7-1.200V.8C12.500.8 10 .8 8 2v11.500M3 4h3M3 6.500h3M3 9h3M10 4h3M10 6.500h3M10 9h3" />
        </Icon>
      </ViewButton>
      <ViewButton $on aria-label="Nyomtatási elrendezés">
        <Icon w={14} h={16} color="#444" sw={1.2}>
          <path d="M1 .7h12v14.600H1zM3 4h8M3 6.500h8M3 9h8M3 11.500h8" />
        </Icon>
      </ViewButton>
      <ViewButton aria-label="Webes elrendezés">
        <Icon w={16} h={16} color="#555" sw={1.2}>
          <path d="M5 14.500H1V1h12v5M3 4h8M3 6.500h5M3 9h3" />
          <circle cx="11" cy="11" r="4.500" />
          <path d="M6.500 11h9M11 6.500c-2.500 3-2.500 6 0 9 2.500-3 2.500-6 0-9" />
        </Icon>
      </ViewButton>
      <ZoomStep aria-label="Kicsinyítés">
        <Icon w={10} h={10}><path d="M0 5h9" /></Icon>
      </ZoomStep>
      <ZoomRange type="range" min="10" max="268" defaultValue="163" aria-label="Nagyítás" />
      <ZoomStep aria-label="Nagyítás">
        <Icon w={10} h={10}><path d="M0 5h9M4.500.5v9" /></Icon>
      </ZoomStep>
      <ZoomValue>168%</ZoomValue>
    </StatusPart>
  </StatusBar>
);

const Gradient = ({ id, from, to }) => (
  <linearGradient id={id} x1="0" y1="0" x2="1" y2="1">
    <stop offset="0" stopColor={from} />
    <stop offset="1" stopColor={to} />
  </linearGradient>
);

const Art = ({ children }) => (
  <Drawing width={28} height={28} viewBox="0 0 28 28" aria-hidden="true">{children}</Drawing>
);

const TaskbarRow = () => (
  <Taskbar>
    <Weather>
      <svg width="27" height="22" viewBox="0 0 27 22" aria-hidden="true">
        <defs>
          <linearGradient id="cloud" x1="0" y1="0" x2="0" y2="1">
            <stop offset="0" stopColor="#a3c0e8" />
            <stop offset=".5" stopColor="#b9cfee" />
            <stop offset="1" stopColor="#f2f5fb" />
          </linearGradient>
        </defs>
        <path d="M7 18C-1 18-1 9 5 8.500 6-1.500 18-1.500 19 7.500c9-1 9 10.500 1 10.500z" fill="url(#cloud)" />
        <path d="M10 11c2-3.500 6-4.500 9-3.500" fill="none" stroke="#8eaede" />
      </svg>
      <TwoLines>
        <span>80°F</span>
        <b>Felhős</b>
      </TwoLines>
    </Weather>
    <AppList>
      <TaskButton aria-label="Start">
        <Art>
          <defs><Gradient id="win" from="#4cc8fb" to="#0067d0" /></defs>
          <path d="M1 1h12.500v12.500H1zM14.500 1H27v12.500H14.500zM1 14.500h12.500V27H1zM14.500 14.500H27V27H14.500z" fill="url(#win)" />
        </Art>
      </TaskButton>
      <TaskButton aria-label="Keresés">
        <Art>
          <circle cx="13" cy="12" r="9.500" fill="#e5e9f6" stroke="#2c2c2c" strokeWidth="2.500" />
          <path d="M19.500 19.500 25 25.500" stroke="#222" strokeWidth="3.500" strokeLinecap="round" />
        </Art>
      </TaskButton>
      <TaskButton aria-label="Feladatnézet">
        <Art>
          <rect x="1" y="8" width="20" height="18" rx="1" fill="#2a2a2a" />
          <rect x="8" y="1" width="19" height="18" rx="1" fill="#f7f7f7" />
          <path d="M8 8h13v11H8z" fill="#bcbcbc" />
        </Art>
      </TaskButton>
      <TaskButton aria-label="Csevegés">
        <Art>
          <defs><Gradient id="chat" from="#9a6fae" to="#4a52cf" /></defs>
          <path d="M14 1c7.200 0 12.500 5.500 12.500 12.500S21 26.500 14 26.500c-2 0-4-.5-5.500-1L2 26.500l1.500-5.500C-1 12 4 1 14 1z" fill="url(#chat)" />
          <rect x="7" y="9" width="10" height="10" rx="1.500" fill="#fff" />
          <path d="M18.500 12.500 21.500 9.500v9l-3-3z" fill="#fff" />
        </Art>
      </TaskButton>
      <TaskButton aria-label="Fájlkezelő" $mark="#7b8391">
        <Art>
          <defs><Gradient id="folder" from="#ffdb6e" to="#f8b41c" /></defs>
          <path d="M1 2h9l2 2h15v6H1z" fill="#dd9a0c" />
          <path d="M1 6h10l2-2h14v21.500H1z" fill="url(#folder)" />
          <path d="M5 26v-6c0-2 1-3 3-3h12c2 0 3 1 3 3v6z" fill="#1173c8" />
          <path d="M8 21.500h12" stroke="#0a4d8e" strokeWidth="1.500" />
        </Art>
      </TaskButton>
      <TaskButton aria-label="Edge" $mark="#7b8391">
        <Art>
          <defs>
            <linearGradient id="edge" x1="0" y1=".3" x2="1" y2=".6">
              <stop offset="0" stopColor="#1a8fd8" />
              <stop offset=".5" stopColor="#2fc3d2" />
              <stop offset="1" stopColor="#6be04c" />
            </linearGradient>
          </defs>
          <path d="M.8 13C1.500 5.500 7 .3 14 .3c8 0 13.500 5.500 13.500 11 0 4-3 6.700-7 6.700-4 0-5.500-1.500-4.200-3.500C18.500 11 16 7.500 11 7.500c-4.500 0-8.500 1.500-10.200 5.500z" fill="url(#edge)" />
          <path d="M.8 13c1.700-4 5.700-6 10.200-5.500-4 3-4.500 8-1.500 11.500 3.500 4 10 4.500 16 1.500-2 4.500-6.500 7.200-11.500 7.200C6 27.700 0 21 .8 13z" fill="#0c59a4" />
          <circle cx="7.500" cy="21" r="6.500" fill="#cfcac6" />
          <circle cx="7.500" cy="19" r="2.700" fill="#827d79" />
          <path d="M3 25c1-4 8-4 9 0-3 3-6 3-9 0z" fill="#827d79" />
        </Art>
      </TaskButton>
      <TaskButton aria-label="Áruház">
        <Art>
          <defs><Gradient id="store" from="#1272c0" to="#1b3257" /></defs>
          <path d="M8 6V2h12v4" fill="none" stroke="#43bdf0" strokeWidth="1.800" />
          <path d="M1 5h26v19c0 1.500-1 2.500-2.500 2.500h-21C2 26.500 1 25.500 1 24z" fill="url(#store)" />
          <path d="M8 10h5.500v5.500H8z" fill="#f25022" />
          <path d="M14.500 10H20v5.500h-5.500z" fill="#7fba00" />
          <path d="M8 16.500h5.500V22H8z" fill="#00a4ef" />
          <path d="M14.500 16.500H20V22h-5.500z" fill="#ffb900" />
        </Art>
      </TaskButton>
      <TaskButton aria-label="Word" $bg="#fce5e7" $edge="1px 0 0 #fff, 4px 0 0 #f8dfe4" $mark="#c42b1c">
        <Art>
          <path d="M7 2h20v7H7z" fill="#41a5ee" />
          <path d="M7 8h20v6H7z" fill="#2b7cd3" />
          <path d="M7 14h20v6H7z" fill="#185abd" />
          <path d="M7 20h20v6H7z" fill="#103f91" />
          <rect x="1" y="7" width="14" height="14" rx="1" fill="#185abd" />
          <path d="m4 10.500 2 7 2-6.500 2 6.500 2-7" fill="none" stroke="#fff" strokeWidth="1.500" />
        </Art>
      </TaskButton>
      <TaskButton aria-label="Képmetsző" $bg="#ebeff8" $edge="0 0 0 1px #dfe3ee" $mark="#0078d4" $mw={18}>
        <Art>
          <path d="M5 4h11v11H5z" fill="#fff" />
          <path d="M3.500 14.500v-11h11" fill="none" stroke="#d83b01" strokeWidth="3" strokeDasharray="3.500 1" />
          <path d="M16 5v14.500L14.500 22M6 15.500h13.500l2.500-1" fill="none" stroke="#8a8a8a" strokeWidth="2.200" />
          <circle cx="24.500" cy="14" r="2.600" fill="#fff" stroke="#1e9be4" strokeWidth="1.800" />
          <circle cx="14.500" cy="24" r="2.600" fill="#fff" stroke="#1e9be4" strokeWidth="1.800" />
        </Art>
      </TaskButton>
      <TaskButton aria-label="Teams" $bg="#fce5e7" $mark="#c42b1c">
        <Art>
          <circle cx="15" cy="5" r="4" fill="#7b83eb" />
          <circle cx="23" cy="6" r="3" fill="#5059c9" />
          <path d="M18 10h9v7c0 3-2 5-5 5h-4z" fill="#5059c9" />
          <path d="M9 10h13v9c0 4-3 7-6.500 7S9 23 9 19z" fill="#7b83eb" />
          <rect x="1" y="7" width="14" height="14" rx="1" fill="#4b53bc" />
          <path d="M4.500 11h7M8 11v7" stroke="#fff" strokeWidth="1.800" />
        </Art>
        <AlertCount>8</AlertCount>
      </TaskButton>
      <TaskButton aria-label="Gépház" $mark="#7b8391">
        <Art>
          <path d="M10.500 1h7l1 4 3 1.500 4-1 2.500 5-3 3v2l3 3-2.500 5-4-1-3 1.500-1 4h-7l-1-4-3-1.500-4 1-2.500-5 3-3v-2l-3-3 2.500-5 4 1L9.500 5z" fill="#717981" />
          <circle cx="14" cy="14" r="7" fill="#e9eef5" />
          <circle cx="14" cy="14" r="4.800" fill="#0b5cab" />
        </Art>
      </TaskButton>
      <TaskButton aria-label="Hangelérés" $mark="#7b8391">
        <Art>
          <defs><Gradient id="va" from="#2cd0c4" to="#1b8fe0" /></defs>
          <circle cx="11" cy="9" r="6" fill="#2ccbc8" />
          <path d="M3 17h16c2 0 2.500 1.500 2 3-1.500 4.500-5 7-10 7S2.500 24.500 1 20c-.5-1.500 0-3 2-3z" fill="url(#va)" />
          <path d="M20 4v4M23.300 0v12M26.600 2v8" stroke="#1c7fd0" strokeWidth="1.500" strokeLinecap="round" />
        </Art>
      </TaskButton>
    </AppList>
    <Tray>
      <TrayButton $w={36} aria-label="Rejtett ikonok">
        <Icon w={14} h={8} color="#333" sw={1.3}><path d="m1 7 6-6 6 6" /></Icon>
      </TrayButton>
      <TrayButton $w={34} aria-label="Mikrofon"><Mic color="#2361b5" fill="#b5d2f2" /></TrayButton>
      <TrayButton $w={48}>
        <TwoLines $align="center">
          <span>ENG</span>
          <b>KI</b>
        </TwoLines>
      </TrayButton>
      <TrayButton $w={36} aria-label="Wi-Fi">
        <Icon w={18} h={14} color="#333" sw={1.4}>
          <path d="M.8 5.500C5.500.5 12.500.5 17.200 5.500M3.500 8.200c3-3.300 8-3.300 11 0M6.200 11c1.600-1.700 4-1.700 5.600 0" />
          <circle cx="9" cy="12.800" r="1" fill="#333" />
        </Icon>
      </TrayButton>
      <TrayButton $w={16} aria-label="Hangerő">
        <Icon w={18} h={14} color="#333" sw={1.3}>
          <path d="M1 4.500h2.500L7.500 1v12L3.500 9.500H1zM10 5c1 1 1 3 0 4" />
          <path d="M12.300 3c2 2 2 6 0 8M15 1c3 3 3 9 0 12" stroke="#aab2bc" />
        </Icon>
      </TrayButton>
      <TrayButton $w={38} aria-label="Akkumulátor">
        <Icon w={18} h={14} color="#222" sw={1.3}>
          <rect x="1" y="4" width="14.500" height="9" rx="1.500" />
          <path d="M4 6h6v5H4z" fill="#222" />
          <path d="M17.300 7v3.500M5 0 2 4h3L3.500 7.500" />
        </Icon>
      </TrayButton>
      <Clock>
        <TwoLines $align="right">
          <span>3:09 PM</span>
          <span>9/15/2022</span>
        </TwoLines>
      </Clock>
      <button aria-label="Értesítések">
        <Icon w={18} h={17} color="#333" sw={1.3}>
          <path d="M8 1.500C5 1.500 3 3.500 3 6.500v4L1 13.500h14l-1.500-2.500V9M6 14.500c.5 2 3.500 2 4 0M6.500 6h3.200L6.500 10h3.500M11.500 1H15l-3.500 4.500H15" />
        </Icon>
      </button>
    </Tray>
  </Taskbar>
);

export default function App() {
  return (
    <>
      <GlobalStyle />
      <Desktop>
        <TopBars />
        <Ribbon>
          <ClipboardGroup />
          <Divider />
          <FontGroup />
          <Divider />
          <ParagraphGroup />
          <Divider />
          <StylesGroup />
          <Divider />
          <CommandGroups />
        </Ribbon>
        <Canvas>
          <Page>
            <Paragraph>
              <Badge $x={-22} $y={-23} $w={26}>1</Badge>
              <Badge $x={-25} $y={13}>2</Badge>
              <Lead>A hanghozzáférés egy új</Lead>
              <Covered>xpe</Covered>
              öblítse le Windows 11, amely segít a számítógépekkel való interakcióban. Használhatja a
              <br />
              hangparancs, amellyel a hanghozzáférés különböző funkciókat hajthat végre, például navigációt és interakciót,
              <br />
              alkalmazásokat és diktálást.
              <Badge $x={261} $y={13}>3</Badge>
            </Paragraph>
          </Page>
        </Canvas>
        <Status />
        <TaskbarRow />
      </Desktop>
    </>
  );
}
